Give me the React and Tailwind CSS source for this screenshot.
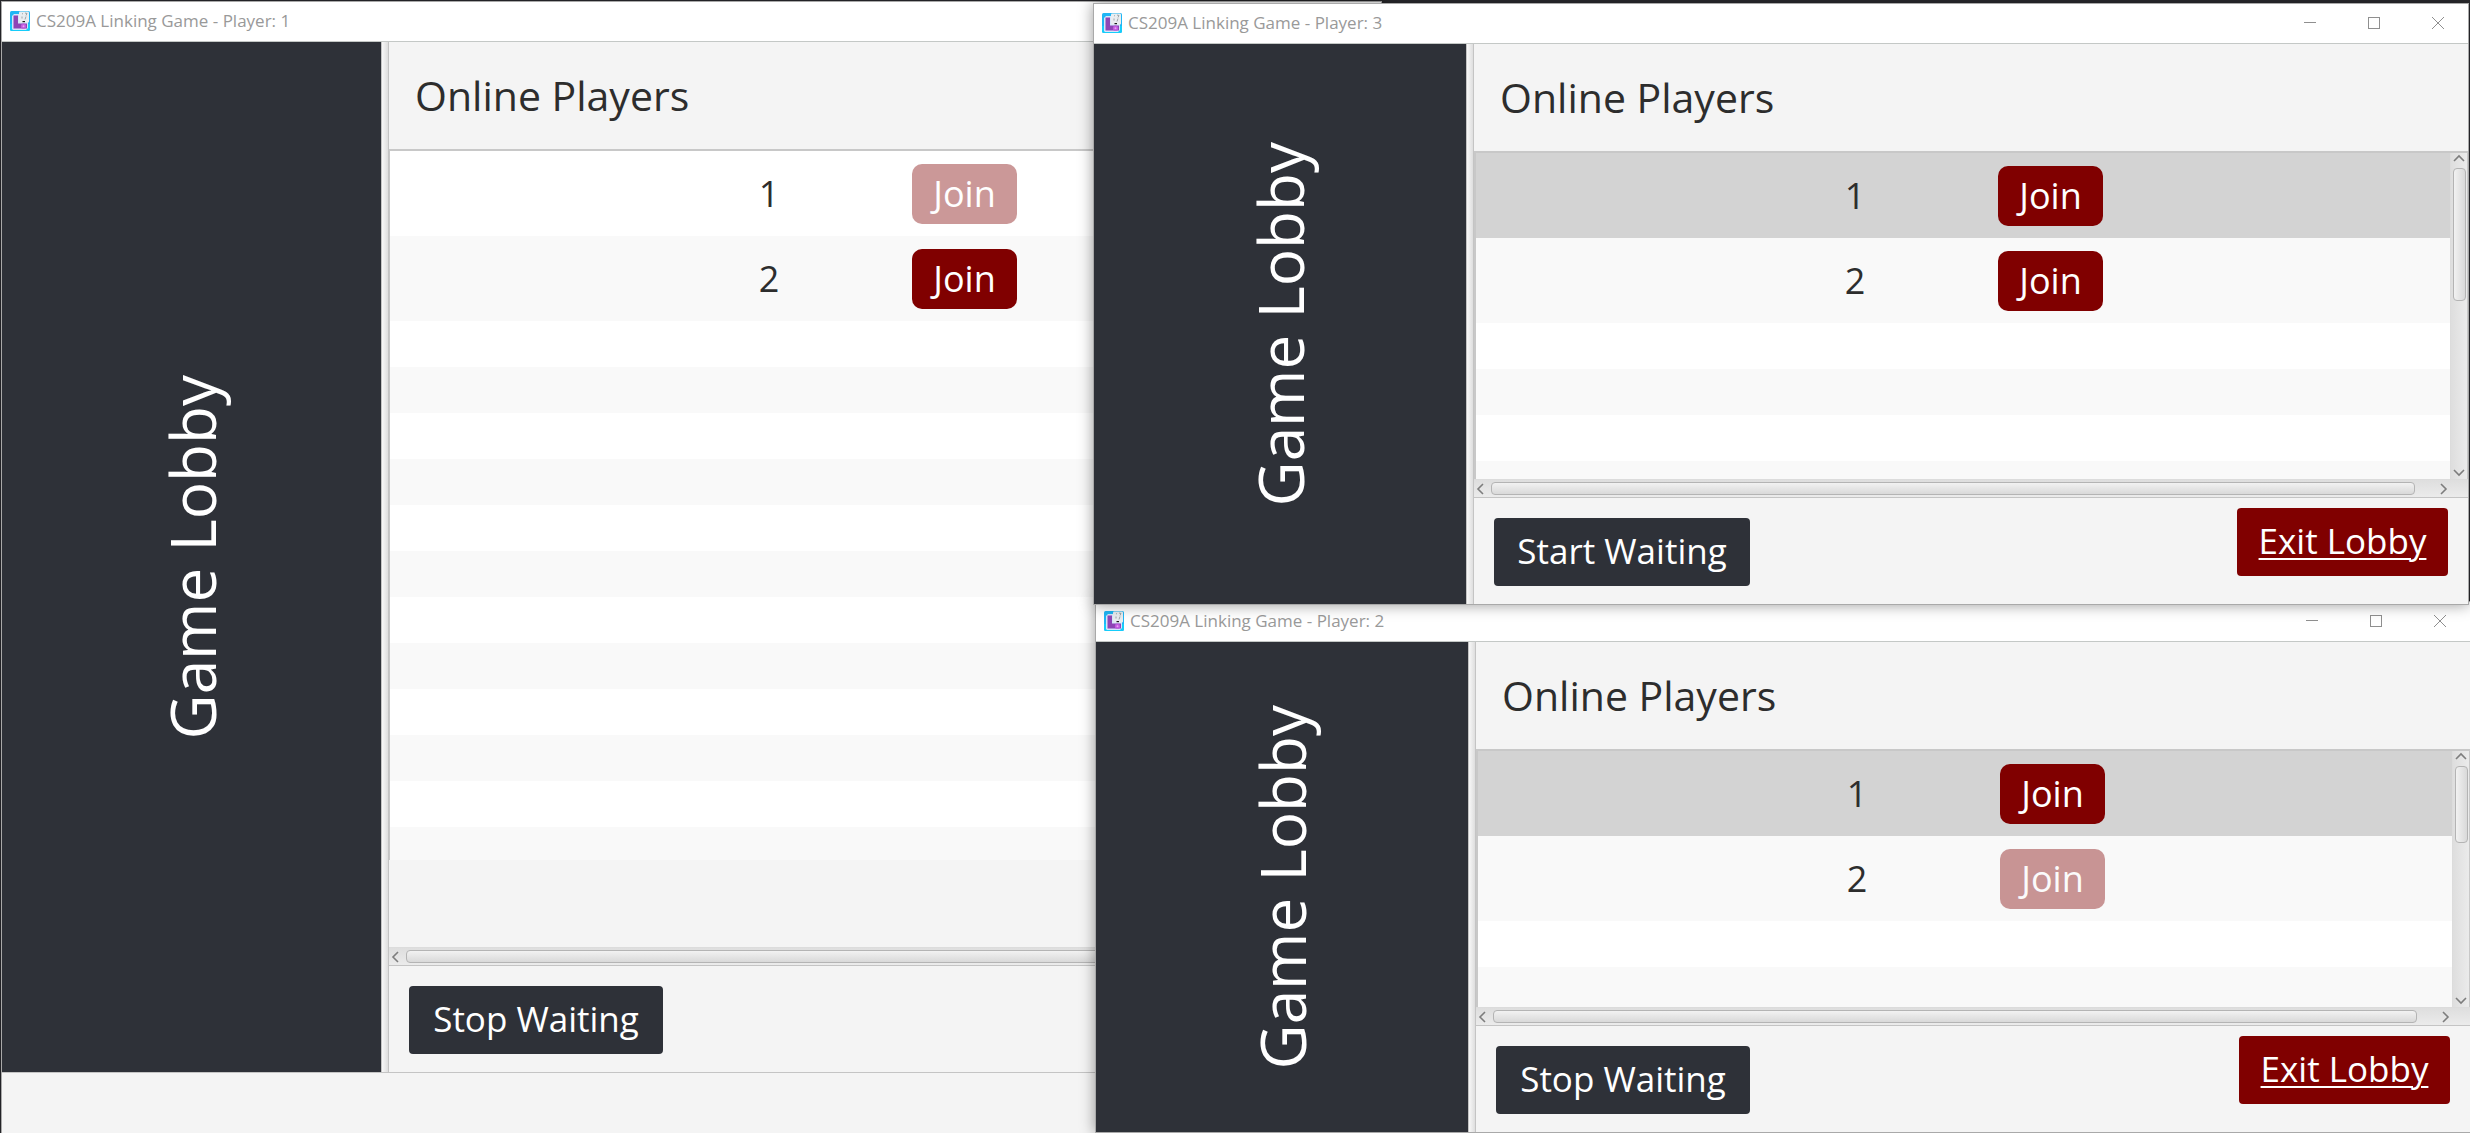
import React from "react";

const chevrons = {
  left: "M8 1 L3 6 L8 11",
  right: "M3 1 L8 6 L3 11",
  up: "M1 8 L6 3 L11 8",
  down: "M1 3 L6 8 L11 3",
};

function Chevron({ dir }) {
  return (
    <svg viewBox="0 0 12 12" className="size-3 shrink-0" fill="none" stroke="#7d7d7d" strokeWidth="1.6">
      <path d={chevrons[dir]} />
    </svg>
  );
}

function AppIcon() {
  return (
    <svg viewBox="0 0 20 20" className="size-5 shrink-0">
      <rect width="20" height="20" rx="1.5" fill="#1fb6f5" />
      <path d="M0 13h20v5.500L18.500 20h-17L0 18.500z" fill="#16cdfa" />
      <path d="M2 5l2-2h5v8h9v6l-2 2H3l-1-1z" fill="#d5e6fb" />
      <path d="M3.500 4.500h4.500v8h9v5h-13.500z" fill="#8e45b5" />
      <rect x="9" y="0.500" width="10" height="11" rx="1" fill="#e9edf0" />
      <path d="M12 2.500l1 .5M15 2l2 .5-1 2M12 5.500v2M16 5.500l-1 3" stroke="#8b9295" strokeWidth="0.8" fill="none" />
      <path d="M12.500 10h2.500v1.200h-2.500z" fill="#1b1b1b" />
      <circle cx="13.500" cy="15.200" r="2.600" fill="#c15ade" />
      <circle cx="13.500" cy="15.200" r="1" fill="#eba0f5" />
    </svg>
  );
}

function TitleBar({ player }) {
  return (
    <header className="flex h-10 shrink-0 items-center border-b border-[#c4c8c6] bg-white pb-0.5 pl-2 text-[#999999]">
      <AppIcon />
      <h1 className="ml-1.5 flex-1 text-[17px] leading-5 whitespace-nowrap">CS209A Linking Game - Player: {player}</h1>
      <div className="-mr-0.5 flex items-center">
        <button aria-label="Minimize" className="grid h-9 w-16 place-items-center">
          <svg viewBox="0 0 12 12" className="size-3" stroke="#8f8f8f" shapeRendering="crispEdges"><path d="M0 5.500h12" /></svg>
        </button>
        <button aria-label="Maximize" className="grid h-9 w-16 place-items-center">
          <svg viewBox="0 0 12 12" className="size-3" stroke="#8f8f8f" fill="none" shapeRendering="crispEdges"><rect x=".5" y=".5" width="11" height="11" /></svg>
        </button>
        <button aria-label="Close" className="grid h-9 w-16 place-items-center">
          <svg viewBox="0 0 12 12" className="size-3" stroke="#8f8f8f"><path d="M0 0l12 12M12 0L0 12" /></svg>
        </button>
      </div>
    </header>
  );
}

function HScroll({ thumb }) {
  return (
    <div className="flex h-[19px] shrink-0 items-center border-y border-t-[#dcdcdc] border-b-[#c4c4c4] bg-gradient-to-b from-[#dedede] to-[#ebebeb] pr-[18px] pl-px">
      <Chevron dir="left" />
      <div className="mx-1 flex-1">
        <div className={`h-[13px] rounded border border-[#b4b4b4] bg-gradient-to-b from-[#f2f2f2] to-[#d9d9d9] ${thumb}`} />
      </div>
      <Chevron dir="right" />
    </div>
  );
}

function VScroll({ thumb }) {
  return (
    <div className="flex w-[18px] shrink-0 flex-col items-center border-x border-l-[#dcdcdc] border-r-[#c8c8c8] bg-gradient-to-r from-[#dedede] to-[#ebebeb]">
      <Chevron dir="up" />
      <div className="mt-[3px] flex-1">
        <div className={`w-[13px] rounded border border-[#b4b4b4] bg-gradient-to-r from-[#f2f2f2] to-[#d9d9d9] ${thumb}`} />
      </div>
      <Chevron dir="down" />
    </div>
  );
}

function PlayerRow({ id, disabled, className }) {
  return (
    <li className={`grid h-[85px] shrink-0 grid-cols-[340px_78px_105px] items-center text-[#2d2d2d] ${className}`}>
      <span className="col-start-2 text-center text-[36px] leading-10">{id}</span>
      <button
        disabled={disabled}
        aria-label={`Join player ${id}`}
        className="ml-[104px] h-[60px] w-[105px] rounded-[10px] bg-[#800000] text-[36px] leading-10 text-white disabled:opacity-40"
      >
        Join
      </button>
    </li>
  );
}

function PlayerList({ disabledId, selected, fillers }) {
  return (
    <ul className={`flex min-h-0 min-w-0 flex-1 flex-col overflow-hidden border-[#c8c8c8] bg-white ${selected ? "border-l-2" : "border-l"}`}>
      <PlayerRow id={1} disabled={disabledId === 1} className={selected ? "bg-[#d3d3d3]" : "bg-white"} />
      <PlayerRow id={2} disabled={disabledId === 2} className="bg-[#f9f9f9]" />
      {Array.from({ length: fillers }, (_, i) => (
        <li key={i} className="h-[46px] shrink-0 even:bg-[#f9f9f9]" />
      ))}
    </ul>
  );
}

function LobbyWindow({ player, frame, sidebar, disabledId, selected, fillers, waiting, list, hThumb, vThumb, exit, status }) {
  return (
    <section
      aria-label={`Player ${player}`}
      className={`absolute flex flex-col overflow-hidden border border-[#a9a9a9] bg-[#f4f4f4] shadow-[0_0_14px_rgba(0,0,0,0.4)] ${frame}`}
    >
      <TitleBar player={player} />
      <div className="flex min-h-0 flex-1">
        <aside className={`flex shrink-0 items-center justify-center bg-[#2e3138] text-white ${sidebar}`}>
          <h2 className="rotate-180 text-[62px] leading-[88px] whitespace-nowrap [writing-mode:vertical-rl]">Game Lobby</h2>
        </aside>
        <div className="w-2 shrink-0 border-x border-[#c4c4c4] bg-gradient-to-r from-[#f8f8f8] to-[#dedede]" />
        <main className="flex min-w-0 flex-1 flex-col">
          <h3 className="flex h-[107px] shrink-0 items-center pb-0.5 pl-[26px] text-[41px] leading-[56px] text-[#2d2d2d]">Online Players</h3>
          <div className={`flex min-h-0 border-t-2 border-[#c8c8c8] ${list}`}>
            <PlayerList disabledId={disabledId} selected={selected} fillers={fillers} />
            {vThumb && <VScroll thumb={vThumb} />}
          </div>
          {!vThumb && <div className="flex-1" />}
          <HScroll thumb={hThumb} />
          <footer className="flex h-[106px] shrink-0 items-start justify-between px-5">
            <button className={`mt-5 h-[68px] rounded bg-[#2e3138] pb-0.5 text-[35px] leading-10 whitespace-nowrap text-white ${waiting === "Start Waiting" ? "w-64" : "w-[254px]"}`}>
              {waiting}
            </button>
            {exit && (
              <a href="#exit" className="mt-2.5 grid h-[68px] w-[211px] place-items-center rounded bg-[#800000] pb-0.5 text-[35px] leading-10 whitespace-nowrap text-white underline decoration-2 underline-offset-4">
                Exit Lobby
              </a>
            )}
          </footer>
        </main>
      </div>
      {status && <div className="h-[61px] shrink-0 border-t border-[#c4c4c4]" />}
    </section>
  );
}

export default function App() {
  return (
    <div className="relative h-screen w-full overflow-hidden bg-[#2b2b2f] font-['Open_Sans','Noto_Sans',sans-serif]">
      <LobbyWindow
        player={1}
        frame="top-[1px] left-[1px] h-[1133px] w-[1381px]"
        sidebar="w-[379px]"
        disabledId={1}
        fillers={12}
        waiting="Stop Waiting"
        list="h-[711px]"
        hThumb="w-full"
        status
      />
      <LobbyWindow
        player={2}
        frame="top-[601px] left-[1095px] h-[532px] w-[1376px]"
        sidebar="w-[372px]"
        disabledId={2}
        selected
        fillers={2}
        waiting="Stop Waiting"
        list="flex-1"
        hThumb="w-[98%]"
        vThumb="h-[77px]"
        exit
      />
      <LobbyWindow
        player={3}
        frame="top-[3px] left-[1093px] h-[602px] w-[1376px]"
        sidebar="w-[372px]"
        selected
        fillers={4}
        waiting="Start Waiting"
        list="flex-1"
        hThumb="w-[98%]"
        vThumb="h-[133px]"
        exit
      />
    </div>
  );
}
